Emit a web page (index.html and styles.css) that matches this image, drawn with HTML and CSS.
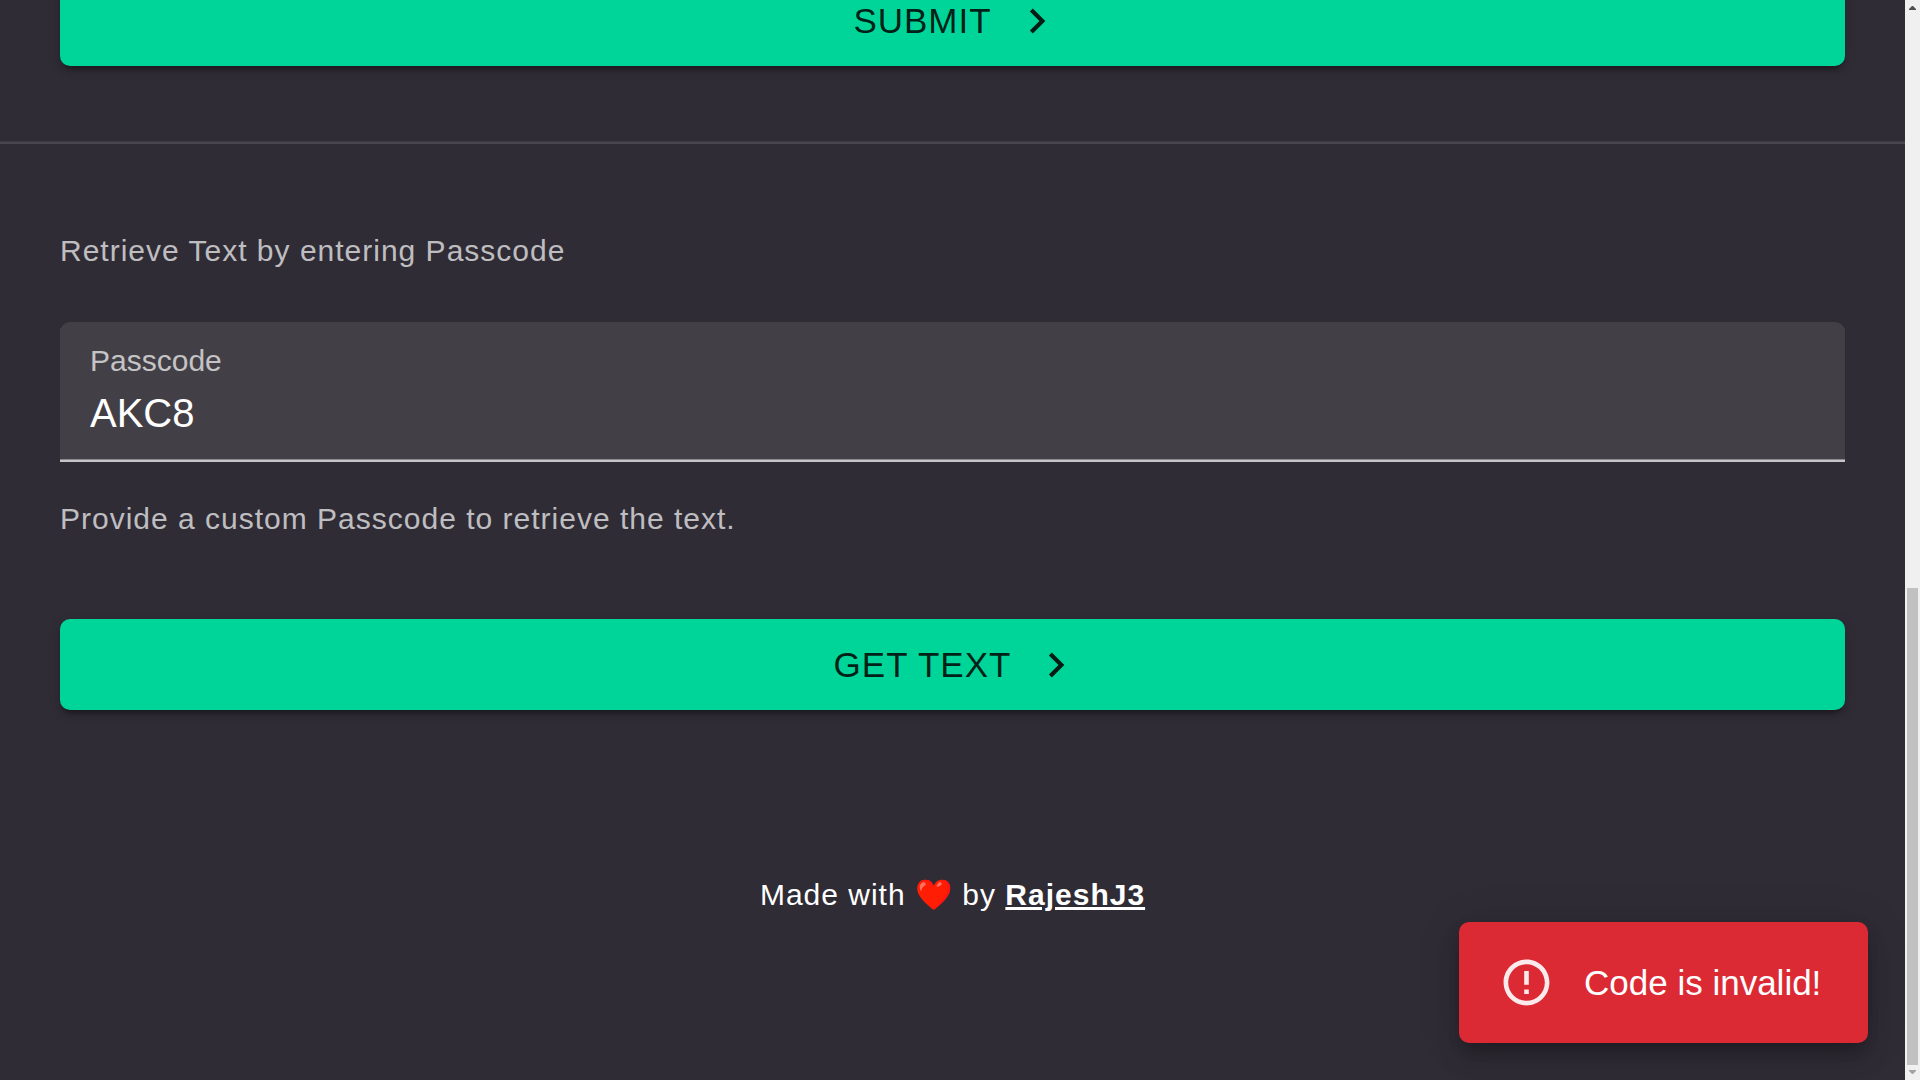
FILE: index.html
```html
<!DOCTYPE html>
<html lang="en">
<head>
    <meta charset="UTF-8">
    <meta name="viewport" content="width=device-width, initial-scale=1.0">
    <title>Share Text</title>
    <link rel="stylesheet" href="styles.css">
</head>
<body>

    <div class="page">
        <main class="content">
            <section class="submit-section">
                <button type="submit" class="btn">
                    Submit
                    <svg class="btn-icon" viewBox="0 0 24 24" aria-hidden="true"><path d="M10 6 8.59 7.41 13.17 12l-4.58 4.59L10 18l6-6z"/></svg>
                </button>
            </section>

            <hr class="divider">

            <form class="retrieve-form">
                <p class="caption">Retrieve Text by entering Passcode</p>
                <div class="field">
                    <label for="passcode">Passcode</label>
                    <input type="text" id="passcode" name="passcode" value="AKC8" autocomplete="off">
                </div>
                <p class="caption helper">Provide a custom Passcode to retrieve the text.</p>
                <button type="button" class="btn">
                    Get Text
                    <svg class="btn-icon" viewBox="0 0 24 24" aria-hidden="true"><path d="M10 6 8.59 7.41 13.17 12l-4.58 4.59L10 18l6-6z"/></svg>
                </button>
            </form>

            <footer class="footer">
                Made with <span class="heart">❤️</span> by <a href="#">RajeshJ3</a>
            </footer>
        </main>

        <div class="scrollbar" aria-hidden="true">
            <svg class="arrow arrow-up" viewBox="0 0 15 15"><path d="M4 10V9l3-3h1l3 3v1z"/></svg>
            <div class="thumb"></div>
            <svg class="arrow arrow-down" viewBox="0 0 15 15"><path d="M4 5v1l3 3h1l3-3V5z"/></svg>
        </div>

        <div class="toast" role="alert">
            <svg class="toast-icon" viewBox="0 0 24 24" aria-hidden="true"><path d="M11 15h2v2h-2zm0-8h2v6h-2zm.99-5C6.47 2 2 6.48 2 12s4.47 10 9.99 10C17.52 22 22 17.52 22 12S17.52 2 11.99 2zM12 20c-4.42 0-8-3.58-8-8s3.58-8 8-8 8 3.58 8 8-3.58 8-8 8z"/></svg>
            <span>Code is invalid!</span>
        </div>
    </div>

</body>
</html>
```

FILE: styles.css
```css
* {
    box-sizing: border-box;
}
body {
    font-family: "Liberation Sans", Arial, sans-serif;
    background-color: #302c36;
    color: #fff;
    margin: 0;
}
.page {
    position: relative;
    display: flex;
    height: 100vh;
    overflow: hidden;
}
/* the page sits scrolled to its end */
.content {
    flex: 1;
    display: flex;
    flex-direction: column;
    justify-content: flex-end;
}
.submit-section {
    padding: 0 60px 76px;
}
.btn {
    display: flex;
    align-items: center;
    justify-content: center;
    width: 100%;
    padding: 15px 40px;
    border: none;
    border-radius: 10px;
    background-color: #00d599;
    color: rgba(0, 0, 0, 0.87);
    font-family: inherit;
    font-size: 35px;
    line-height: 61px;
    letter-spacing: 1px;
    text-transform: uppercase;
    cursor: pointer;
    box-shadow: 0 8px 3px -5px rgba(0, 0, 0, 0.2), 0 5px 5px rgba(0, 0, 0, 0.14), 0 3px 13px rgba(0, 0, 0, 0.12);
}
.btn:hover {
    background-color: #00be88;
}
.btn-icon {
    width: 50px;
    height: 50px;
    margin-left: 20px;
    margin-right: -10px;
    fill: currentColor;
}
.divider {
    width: 100%;
    margin: 0;
    border: none;
    border-top: 2px solid #4a4650;
    box-shadow: 0 -1px #3d3943;
}
.retrieve-form {
    padding: 82px 60px 0;
}
.caption {
    margin: 0 0 46px;
    color: rgba(255, 255, 255, 0.7);
    font-size: 30px;
    line-height: 50px;
    letter-spacing: 1px;
}
.helper {
    margin: 32px 0 75px;
}
.field {
    display: flex;
    flex-direction: column;
    gap: 12px;
    padding: 22px 30px 24px;
    border-bottom: 2px solid #c5c4c7;
    border-radius: 10px 10px 0 0;
    background-color: #433f46;
    box-shadow: inset 0 -1px #8a888c;
}
.field label {
    color: rgba(255, 255, 255, 0.7);
    font-size: 30px;
    line-height: 34px;
}
.field input {
    width: 100%;
    height: 46px;
    padding: 0;
    border: none;
    outline: none;
    background: none;
    color: #fff;
    font-family: inherit;
    font-size: 40px;
}
.footer {
    padding: 160px 60px;
    font-size: 30px;
    line-height: 50px;
    letter-spacing: 1px;
    text-align: center;
}
.heart {
    filter: saturate(2);
}
.footer a {
    color: #fff;
    font-weight: bold;
}
.toast {
    position: absolute;
    right: 52px;
    bottom: 37px;
    display: flex;
    align-items: center;
    gap: 30px;
    min-width: 409px;
    padding: 33px 40px;
    border-radius: 10px;
    background-color: #dc2a34;
    font-size: 35px;
    line-height: 50px;
    box-shadow: 0 8px 13px -3px rgba(0, 0, 0, 0.2), 0 15px 25px rgba(0, 0, 0, 0.14), 0 3px 45px rgba(0, 0, 0, 0.12);
}
.toast-icon {
    width: 55px;
    height: 55px;
    fill: #fff;
    opacity: 0.9;
}
.scrollbar {
    display: flex;
    flex-direction: column;
    width: 15px;
    background-color: #f0f0f0;
}
.arrow {
    width: 15px;
    height: 15px;
}
.arrow-up {
    fill: #505050;
}
.arrow-down {
    fill: #a3a3a3;
}
.thumb {
    height: 477px;
    margin: auto 2px 0;
    background-color: #c1c1c1;
}
```
